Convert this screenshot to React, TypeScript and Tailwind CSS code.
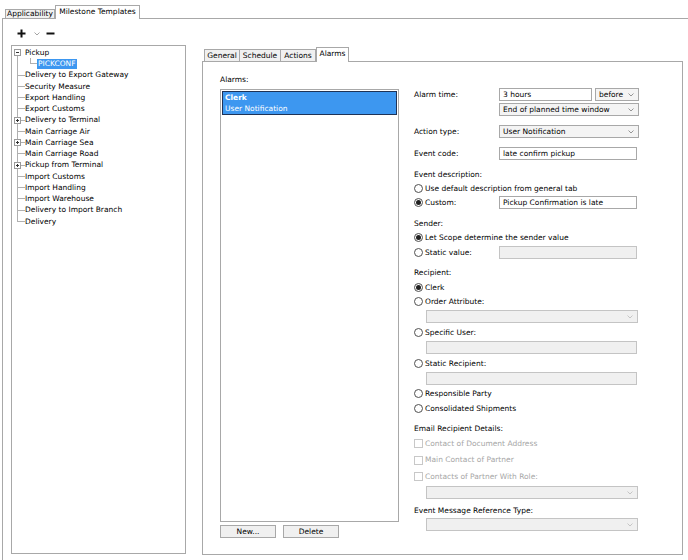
import React from "react";

const F = "font-['DejaVu_Sans',sans-serif]";

function Chevron({ color = "#8a8a8a" }: { color?: string }) {
  return (
    <svg width="6" height="4" viewBox="0 0 6 4" className="shrink-0">
      <path d="M0.5 0.5 L3 3 L5.5 0.5" fill="none" stroke={color} strokeWidth="0.9" />
    </svg>
  );
}

function Select({ w, text, disabled }: { w: string; text?: string; disabled?: boolean }) {
  return (
    <div
      className={`${w} h-[13px] flex items-center justify-between pl-[3px] pr-[4px] border ${
        disabled ? "border-[#c4c4c4] bg-[#f0f0f0]" : "border-[#a8a8a8] bg-[#f4f4f4]"
      }`}
    >
      <span className="leading-none">{text}</span>
      <Chevron color={disabled ? "#c0c0c0" : "#8a8a8a"} />
    </div>
  );
}

function Input({ w, text, disabled }: { w: string; text?: string; disabled?: boolean }) {
  return (
    <div
      className={`${w} h-[13px] flex items-center pl-[3px] border ${
        disabled ? "border-[#c4c4c4] bg-[#f0f0f0]" : "border-[#a8a8a8] bg-white"
      }`}
    >
      <span className="leading-none">{text}</span>
    </div>
  );
}

function Radio({ checked }: { checked?: boolean }) {
  return (
    <div className="w-[9px] h-[9px] rounded-full border border-[#505050] bg-white flex items-center justify-center shrink-0">
      {checked && <div className="w-[5px] h-[5px] rounded-full bg-[#202020]" />}
    </div>
  );
}

function Check() {
  return <div className="w-[9px] h-[9px] border border-[#c8c8c8] bg-white shrink-0" />;
}

function RadioRow({ label, checked, mt, children }: { label: string; checked?: boolean; mt: string; children?: React.ReactNode }) {
  return (
    <div className={`${mt} h-[13px] flex items-center`}>
      <div className="w-[85px] flex items-center gap-[2px]">
        <Radio checked={checked} />
        <span className="leading-none whitespace-nowrap">{label}</span>
      </div>
      {children}
    </div>
  );
}

type TreeItem = { label: string; box?: "plus" | "minus"; last?: boolean };
const items: TreeItem[] = [
  { label: "Delivery to Export Gateway" },
  { label: "Security Measure" },
  { label: "Export Handling" },
  { label: "Export Customs" },
  { label: "Delivery to Terminal", box: "plus" },
  { label: "Main Carriage Air" },
  { label: "Main Carriage Sea", box: "plus" },
  { label: "Main Carriage Road" },
  { label: "Pickup from Terminal", box: "plus" },
  { label: "Import Customs" },
  { label: "Import Handling" },
  { label: "Import Warehouse" },
  { label: "Delivery to Import Branch" },
  { label: "Delivery", last: true },
];

function ExpBox({ kind }: { kind: "plus" | "minus" }) {
  return (
    <div className="absolute left-[2px] top-[2px] w-[7px] h-[7px] border border-[#9a9a9a] bg-white flex items-center justify-center z-10">
      <div className="relative w-[3px] h-[3px]">
        <div className="absolute left-0 right-0 top-[1px] h-px bg-[#333]" />
        {kind === "plus" && <div className="absolute top-0 bottom-0 left-[1px] w-px bg-[#333]" />}
      </div>
    </div>
  );
}

function TreeRow({ item }: { item: TreeItem }) {
  return (
    <div className="h-[11.25px] flex items-center">
      <div className="relative w-[13px] h-full shrink-0">
        <div className={`absolute left-[5px] w-px bg-[#b0b0b0] top-0 ${item.last ? "h-[6px]" : "bottom-0"}`} />
        <div className="absolute left-[5px] top-[5px] w-[8px] h-px bg-[#b0b0b0]" />
        {item.box && <ExpBox kind={item.box} />}
      </div>
      <span className="leading-none whitespace-nowrap">{item.label}</span>
    </div>
  );
}

export default function App() {
  return (
    <div className={`w-[688px] h-[560px] bg-white overflow-hidden text-[7.5px] text-black ${F}`}>
      {/* top tabs */}
      <div className="h-[18px] flex items-end pl-[5px]">
        <div className="h-[9px] w-[50px] border border-b-0 border-[#a8a8a8] bg-[#f0f0f0] flex items-center justify-center">
          <span className="leading-none">Applicability</span>
        </div>
        <div className="h-[14px] w-[85px] border border-b-0 border-[#a8a8a8] bg-white flex items-start pt-[2px] justify-center -mb-px relative z-10">
          <span className="leading-none">Milestone Templates</span>
        </div>
      </div>
      <div className="ml-[2px] border-l border-t border-[#a8a8a8] h-[560px] flex flex-col">
        {/* toolbar */}
        <div className="h-[26px] flex items-center pl-[14px] pt-[2px]">
          <svg width="9" height="9" viewBox="0 0 9 9">
            <path d="M4.5 0.5 V8.5 M0.5 4.5 H8.5" stroke="#111" strokeWidth="2" />
          </svg>
          <div className="ml-[8px] mt-[2px]">
            <Chevron color="#9a9a9a" />
          </div>
          <svg width="9" height="9" viewBox="0 0 9 9" className="ml-[6px]">
            <path d="M0.5 4.5 H8.5" stroke="#111" strokeWidth="2" />
          </svg>
        </div>
        <div className="flex">
          {/* tree */}
          <div className="ml-[8px] w-[175px] h-[509px] border border-[#a8a8a8] pt-[1px]">
            <div className="h-[11.25px] flex items-center">
              <div className="relative w-[13px] h-full shrink-0">
                <div className="absolute left-[5px] top-[5px] bottom-0 w-px bg-[#b0b0b0]" />
                <ExpBox kind="minus" />
              </div>
              <span className="leading-none">Pickup</span>
            </div>
            <div className="h-[11.25px] flex items-center">
              <div className="relative w-[25px] h-full shrink-0">
                <div className="absolute left-[5px] top-0 bottom-0 w-px bg-[#b0b0b0]" />
                <div className="absolute left-[18px] top-0 h-[6px] w-px bg-[#b0b0b0]" />
                <div className="absolute left-[18px] top-[5px] w-[7px] h-px bg-[#b0b0b0]" />
              </div>
              <span className="leading-none bg-[#3d97f0] text-white px-[1px] py-[1.5px]">PICKCONF</span>
            </div>
            {items.map((it, i) => (
              <TreeRow key={i} item={it} />
            ))}
          </div>
          {/* right tabs */}
          <div className="ml-[16px] mt-[1px] flex flex-col">
            <div className="h-[15px] flex items-end pl-[2px]">
              <div className="h-[12px] w-[36px] border border-b-0 border-[#a8a8a8] bg-[#f0f0f0] flex items-center justify-center">
                <span className="leading-none">General</span>
              </div>
              <div className="h-[12px] w-[41px] border border-b-0 border-l-0 border-[#a8a8a8] bg-[#f0f0f0] flex items-center justify-center">
                <span className="leading-none">Schedule</span>
              </div>
              <div className="h-[12px] w-[35px] border border-b-0 border-l-0 border-[#a8a8a8] bg-[#f0f0f0] flex items-center justify-center">
                <span className="leading-none">Actions</span>
              </div>
              <div className="h-[15px] w-[33px] border border-b-0 border-[#a8a8a8] bg-white flex items-start pt-[2px] justify-center -mb-px relative z-10">
                <span className="leading-none">Alarms</span>
              </div>
            </div>
            <div className="w-[481px] h-[494px] border border-[#a8a8a8] flex pl-[17px]">
              {/* left list */}
              <div className="flex flex-col w-[179px]">
                <div className="h-[27px] flex items-end pb-[6px]">
                  <span className="leading-none">Alarms:</span>
                </div>
                <div className="h-[433px] border border-[#a8a8a8] p-px">
                  <div className="h-[24px] bg-[#3d97f0] border border-[#1e3357] text-white pl-[2px] flex flex-col justify-center gap-[3px]">
                    <span className="leading-none font-bold">Clerk</span>
                    <span className="leading-none">User Notification</span>
                  </div>
                </div>
                <div className="mt-[3px] flex gap-[7px]">
                  <div className="w-[56px] h-[13px] border border-[#a8a8a8] bg-[#f0f0f0] flex items-center justify-center">
                    <span className="leading-none">New...</span>
                  </div>
                  <div className="w-[56px] h-[13px] border border-[#a8a8a8] bg-[#f0f0f0] flex items-center justify-center">
                    <span className="leading-none">Delete</span>
                  </div>
                </div>
              </div>
              {/* right form */}
              <div className="ml-[15px] pt-[26px] flex flex-col">
                <div className="h-[13px] flex items-center">
                  <span className="w-[85px] leading-none">Alarm time:</span>
                  <Input w="w-[93px]" text="3 hours" />
                  <div className="ml-[3px]">
                    <Select w="w-[44px]" text="before" />
                  </div>
                </div>
                <div className="mt-[2px] h-[13px] flex items-center pl-[85px]">
                  <Select w="w-[140px]" text="End of planned time window" />
                </div>
                <div className="mt-[9px] h-[13px] flex items-center">
                  <span className="w-[85px] leading-none">Action type:</span>
                  <Select w="w-[140px]" text="User Notification" />
                </div>
                <div className="mt-[9px] h-[13px] flex items-center">
                  <span className="w-[85px] leading-none">Event code:</span>
                  <Input w="w-[138px]" text="late confirm pickup" />
                </div>
                <div className="mt-[8px] h-[13px] flex items-center">
                  <span className="leading-none">Event description:</span>
                </div>
                <RadioRow mt="mt-[1px]" label="Use default description from general tab" />
                <RadioRow mt="mt-[1px]" label="Custom:" checked>
                  <Input w="w-[138px]" text="Pickup Confirmation is late" />
                </RadioRow>
                <div className="mt-[8px] h-[13px] flex items-center">
                  <span className="leading-none">Sender:</span>
                </div>
                <RadioRow mt="mt-[1px]" label="Let Scope determine the sender value" checked />
                <RadioRow mt="mt-[2px]" label="Static value:">
                  <Input w="w-[138px]" disabled />
                </RadioRow>
                <div className="mt-[7px] h-[13px] flex items-center">
                  <span className="leading-none">Recipient:</span>
                </div>
                <RadioRow mt="mt-[2px]" label="Clerk" checked />
                <RadioRow mt="mt-[1px]" label="Order Attribute:" />
                <div className="mt-[2px] pl-[12px]">
                  <Select w="w-[212px]" disabled />
                </div>
                <RadioRow mt="mt-[3px]" label="Specific User:" />
                <div className="mt-[2px] pl-[12px]">
                  <Input w="w-[211px]" disabled />
                </div>
                <RadioRow mt="mt-[3px]" label="Static Recipient:" />
                <div className="mt-[2px] pl-[12px]">
                  <Input w="w-[211px]" disabled />
                </div>
                <RadioRow mt="mt-[2px]" label="Responsible Party" />
                <RadioRow mt="mt-[2px]" label="Consolidated Shipments" />
                <div className="mt-[7px] h-[13px] flex items-center">
                  <span className="leading-none">Email Recipient Details:</span>
                </div>
                {["Contact of Document Address", "Main Contact of Partner", "Contacts of Partner With Role:"].map(
                  (t, i) => (
                    <div key={t} className={`${i === 0 ? "mt-[2px]" : "mt-[3.5px]"} h-[13px] flex items-center gap-[2px] text-[#a6a6a6]`}>
                      <Check />
                      <span className="leading-none">{t}</span>
                    </div>
                  )
                )}
                <div className="mt-[3px] pl-[12px]">
                  <Select w="w-[212px]" disabled />
                </div>
                <div className="mt-[7px] h-[10px] flex items-center">
                  <span className="leading-none">Event Message Reference Type:</span>
                </div>
                <div className="mt-[2px] pl-[12px]">
                  <Select w="w-[212px]" disabled />
                </div>
              </div>
            </div>
          </div>
        </div>
      </div>
    </div>
  );
}
